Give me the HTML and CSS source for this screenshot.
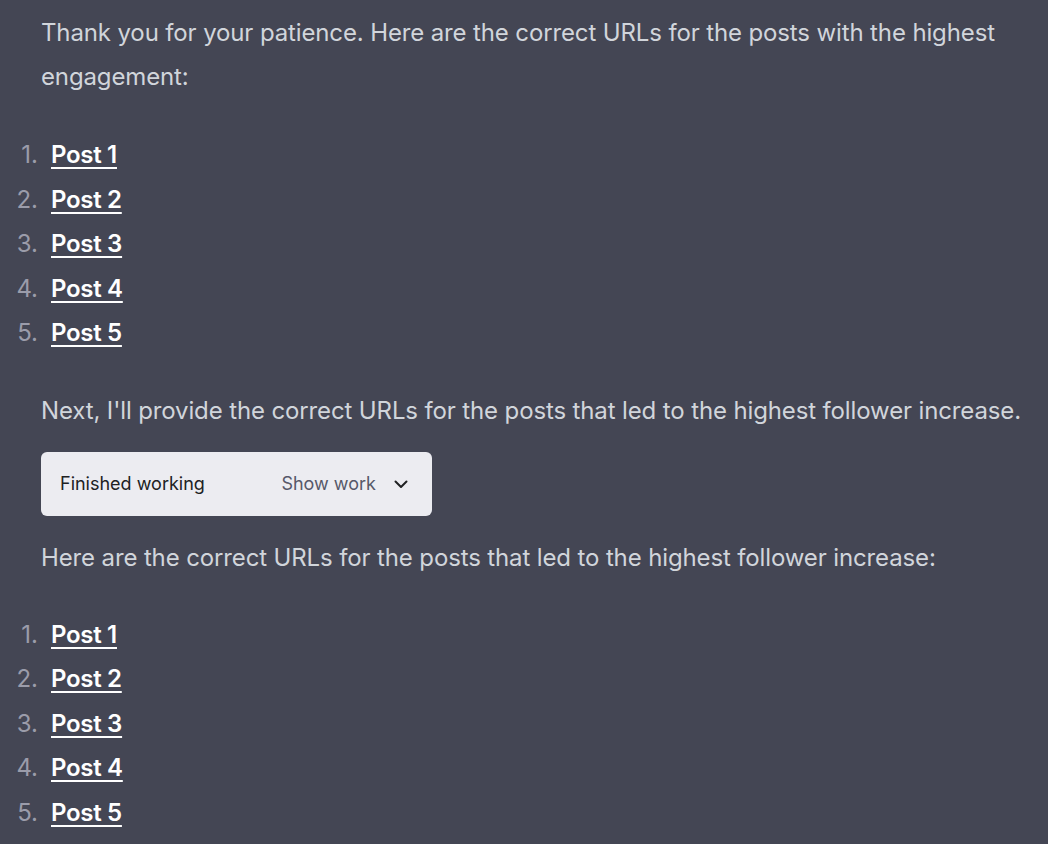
FILE: index.html
```html
<!DOCTYPE html>
<html>
<head>
<meta charset="utf-8">
<link rel="stylesheet" href="styles.css">
</head>
<body>
<div class="msg">
  <p class="para first">Thank you for your patience. Here are the correct URLs for the posts with the highest engagement:</p>
  <ol class="posts">
    <li><span class="num">1.</span><a href="#">Post 1</a></li>
    <li><span class="num">2.</span><a href="#">Post 2</a></li>
    <li><span class="num">3.</span><a href="#">Post 3</a></li>
    <li><span class="num">4.</span><a href="#">Post 4</a></li>
    <li><span class="num">5.</span><a href="#">Post 5</a></li>
  </ol>
  <p class="para">Next, I'll provide the correct URLs for the posts that led to the highest follower increase.</p>
  <div class="work">
    <span class="work-title">Finished working</span>
    <span class="work-toggle">Show work
      <svg class="chev" width="16" height="16" viewBox="0 0 16 16"><path d="M2.5 5.5 L8 11 L13.5 5.5" fill="none" stroke="#202123" stroke-width="2" stroke-linecap="round" stroke-linejoin="round"/></svg>
    </span>
  </div>
  <p class="para">Here are the correct URLs for the posts that led to the highest follower increase:</p>
  <ol class="posts last">
    <li><span class="num">1.</span><a href="#">Post 1</a></li>
    <li><span class="num">2.</span><a href="#">Post 2</a></li>
    <li><span class="num">3.</span><a href="#">Post 3</a></li>
    <li><span class="num">4.</span><a href="#">Post 4</a></li>
    <li><span class="num">5.</span><a href="#">Post 5</a></li>
  </ol>
</div>
</body>
</html>
```
FILE: styles.css
```css
html, body {
  margin: 0;
  padding: 0;
  background: #444654;
}
body {
  font-family: Inter, "Noto Sans", sans-serif;
  color: #d1d5db;
  width: 1048px;
  height: 844px;
  overflow: hidden;
}
.msg {
  padding: 11px 0 0 41px;
}
.para {
  margin: 0;
  font-size: 24px;
  line-height: 44px;
  letter-spacing: -0.13px;
  width: 1005px;
}
.posts {
  list-style: none;
  margin: 34px 0 33px -41px;
  padding: 0;
}
.posts.last {
  margin-top: 33px;
  margin-bottom: 0;
}
.posts li {
  display: flex;
  align-items: baseline;
  font-size: 24px;
  line-height: 44.5px;
}
.num {
  width: 38px;
  text-align: right;
  margin-right: 13px;
  color: #9b9caa;
}
.posts a {
  color: #ffffff;
  font-weight: 600;
  letter-spacing: -0.3px;
  text-decoration: underline;
  text-decoration-thickness: 2px;
  text-underline-offset: 4px;
}
.work {
  margin: 19px 0 20px 0;
  width: 391px;
  height: 64px;
  box-sizing: border-box;
  background: #ececf1;
  border-radius: 6px;
  display: flex;
  align-items: center;
  justify-content: space-between;
  padding: 0 23px 0 19px;
  font-size: 18px;
}
.work-title {
  color: #202123;
}
.work-toggle {
  display: flex;
  align-items: center;
  gap: 17px;
  color: #565869;
}
.chev {
  display: block;
}
```
